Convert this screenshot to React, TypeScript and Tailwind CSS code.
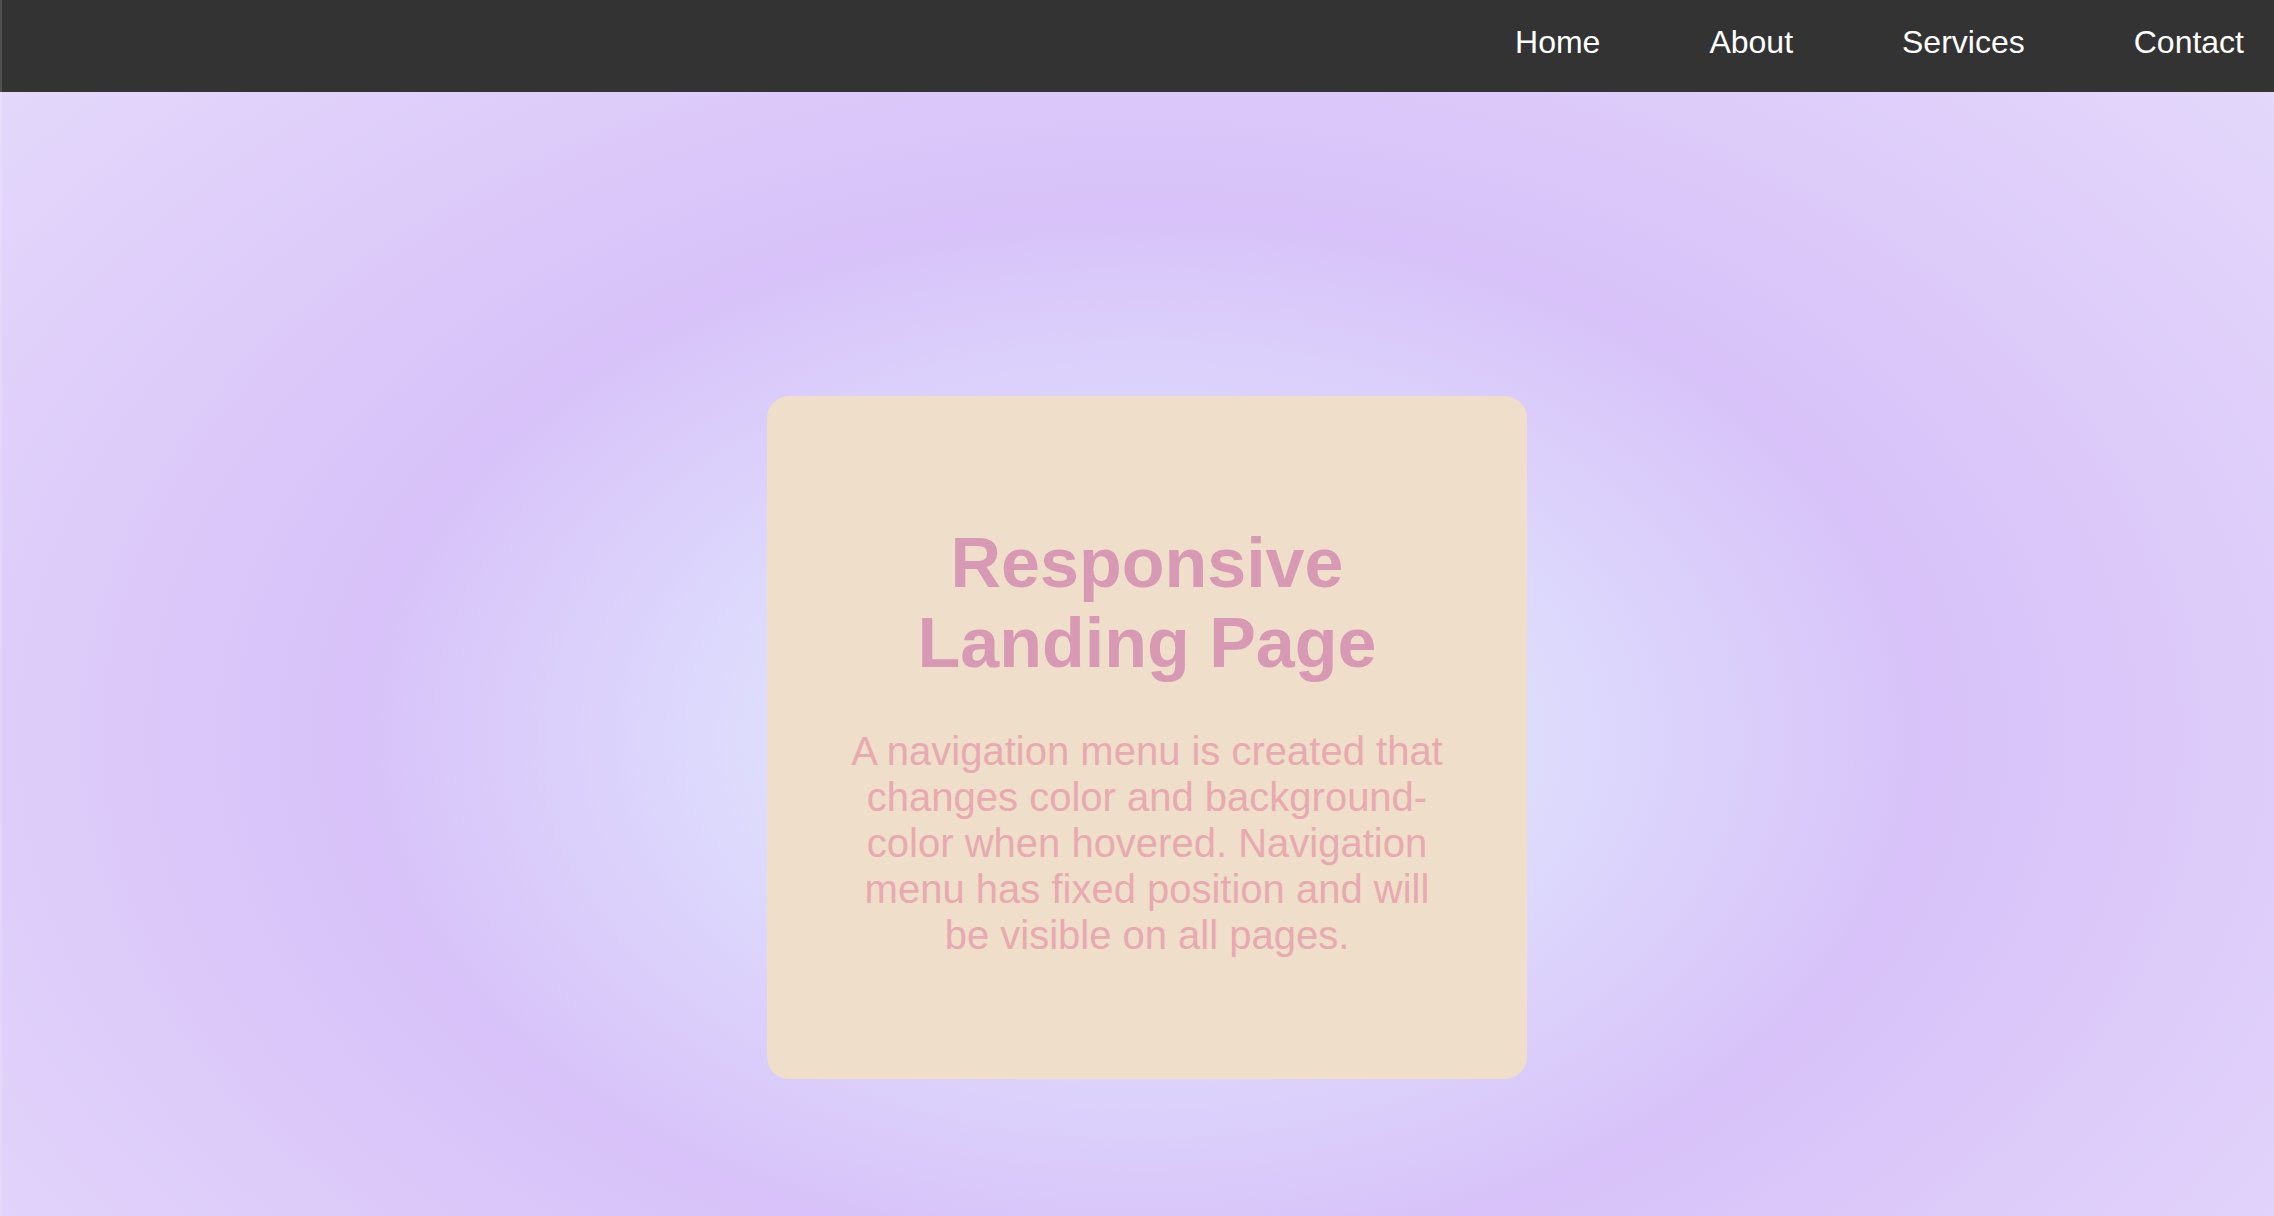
const links = ["Home", "About", "Services", "Contact"];

export default function App() {
  return (
    <div className="relative flex h-screen flex-col overflow-hidden font-['Liberation_Sans',Arial,sans-serif]">
      <nav className="flex h-[92px] shrink-0 items-center justify-end gap-[109px] bg-[#333333] pr-[30px] pb-[8px]">
        {links.map((link) => (
          <a key={link} href="#" className="text-[32px] text-white">
            {link}
          </a>
        ))}
      </nav>

      <main className="flex flex-1 justify-center bg-[radial-gradient(ellipse_787px_524px_at_1142px_645px,#dfe0fd_0%,#dedefd_45%,#d8c2f9_100%,#e5dafb_200%)] pt-[304px] pl-[20px]">
        <div className="flex h-[683px] w-[760px] flex-col items-center rounded-[22px] bg-[#eedeca] px-[80px] pt-[127px] text-center">
          <h1 className="text-[70px] leading-[80px] font-bold text-[#d899b5]">
            Responsive Landing Page
          </h1>
          <p className="mt-[45px] text-[40px] leading-[46px] text-[#e8aab0]">
            A navigation menu is created that changes color and background-color when hovered. Navigation menu has fixed position and will be visible on all pages.
          </p>
        </div>
      </main>

      {/* thin lighter strip along the left window edge */}
      <div className="absolute top-0 left-0 h-full w-[2px] bg-white/15" />
    </div>
  );
}
